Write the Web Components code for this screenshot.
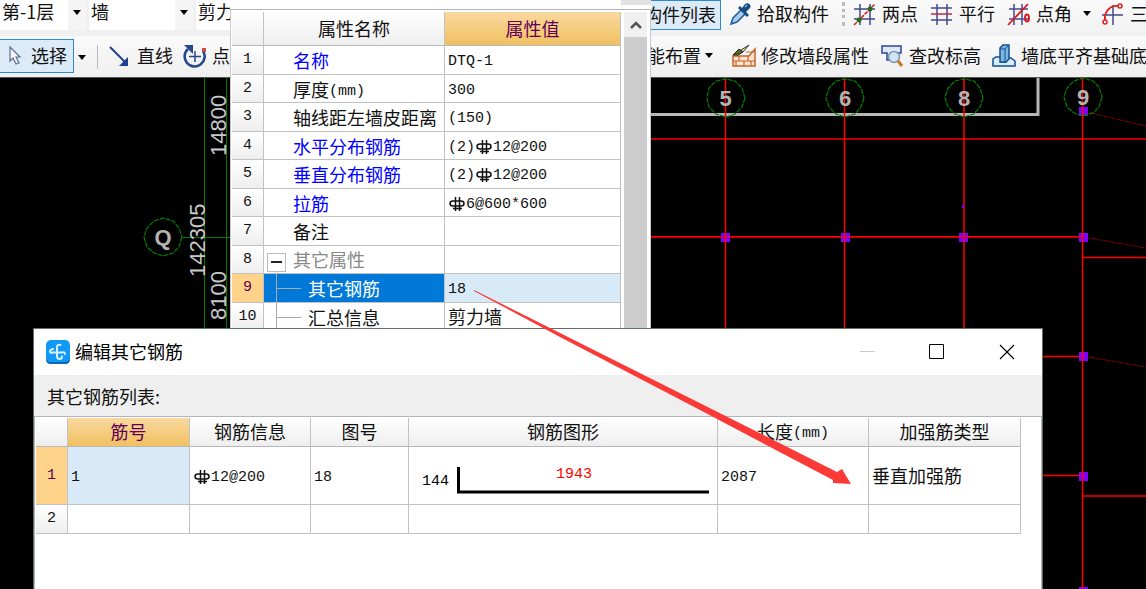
<!DOCTYPE html>
<html lang="zh-CN">
<head>
<meta charset="utf-8">
<title>编辑其它钢筋</title>
<style>
html,body{margin:0;height:100%;overflow:hidden;background:#000}
body{font:18px/24px "Noto Sans CJK SC",sans-serif;color:#111}
</style>
</head>
<body>
<cad-app></cad-app>
<script>
const define = (name, html) => customElements.define(name, class extends HTMLElement {
  connectedCallback() {
    if (this.shadowRoot) return;
    this.attachShadow({ mode: 'open' }).innerHTML = typeof html === 'function' ? html(this) : html;
  }
});

const ICONS = {
  cursor: '<path d="M8 3v14l3-3 3 6 3-1-3-6h4z" fill="#f4f7fb" stroke="#5b6f94" stroke-width="1.2"/>',
  line: '<path d="M2 3 18 19" stroke="#1f3f8f" stroke-width="2"/><path d="M20 22h-9l9-9z" fill="#1f3f8f"/>',
  rotate: '<path d="M5 5A10 10 0 1 0 20 7" fill="none" stroke="#24488c" stroke-width="2.6"/><path d="M1 1h9v9z" fill="#24488c"/><path d="M12 7v11M6 12.500h12" stroke="#24488c" stroke-width="1.500"/><path d="M19 4h4v4h-4z" fill="#c8504c"/>',
  dropper: '<path d="M3 22l2-6 9-9 4 4-9 9z" fill="#a8cdf0" stroke="#1d5a9e" stroke-width="1.500"/><path d="M10 6l9 9 2-2-3-3 4-4c2-3-2-6-5-4l-3 4-2-2z" fill="#174c80"/><path d="M17 5l2-2" stroke="#7fb5e6" stroke-width="1.500"/>',
  twopoint: '<path d="M7 2v21M17 2v21M1 7h21M1 17h21" stroke="#414a8c" stroke-width="1.500"/><path d="M1 23 22 2" stroke="#e01818" stroke-width="1.500" stroke-dasharray="4 1"/><circle cx="6" cy="18" r="2.500" fill="#286a1a"/><circle cx="17" cy="7" r="2.500" fill="#286a1a"/>',
  parallel: '<path d="M7 2v21M17 2v21M1 6h21M1 18h21" stroke="#414a8c" stroke-width="1.500"/><path d="M1 12h21" stroke="#c02840" stroke-width="1.500"/>',
  pointangle: '<path d="M7 2v21M15 2v21M2 7h19M2 17h19" stroke="#414a8c" stroke-width="1.500"/><path d="M1 23 21 2" stroke="#e01818" stroke-width="1.800"/><ellipse cx="20" cy="16" rx="2" ry="3.500" fill="none" stroke="#d02020" stroke-width="2"/>',
  arc: '<path d="M12 3v20M1 13h21" stroke="#414a8c" stroke-width="1.500"/><path d="M4 18C3 10 9 3 17 4" fill="none" stroke="#e02020" stroke-width="1.800"/><circle cx="4" cy="20" r="2" fill="#fff" stroke="#e02020" stroke-width="1.500"/><circle cx="19" cy="4" r="2" fill="#fff" stroke="#e02020" stroke-width="1.500"/>',
  wall: '<path d="M1 12h16l6-7v17H1z" fill="#fbe3cf" stroke="#c86428" stroke-width="1.500"/><path d="M1 17h22M7 12v5M16 12v5M4 17v5M12 17v5M19 17v5M14 8h8" stroke="#c86428" stroke-width="1.200"/><path d="M1 11l6-6 4 3-5 3z" fill="#5a6a20" stroke="#222"/><path d="M9 6l8-5-6 7z" fill="#f6ddb0" stroke="#333"/>',
  inspect: '<path d="M2 2h19v7h-3v7H7V9H2z" fill="#dfe8fa" stroke="#2d459a" stroke-width="1.500"/><circle cx="14" cy="13" r="5.500" fill="#cfe6f6" stroke="#8296ac" stroke-width="1.500"/><path d="M18 17l4 5" stroke="#c87c20" stroke-width="3"/>',
  base: '<path d="M1 21v-6l3-2h5v5h5v-4h5l4 3v5H1z" fill="#d8ecfa" stroke="#124f94" stroke-width="1.500"/><path d="M8 18V4l3-3h6v14l-3 3z" fill="#7eb8e2" stroke="#124f94" stroke-width="1.500"/><path d="M13 5v13M8 5h5l3-3" stroke="#124f94" fill="none"/>',
  logo: '<rect width="24" height="24" rx="5" fill="#119af5"/><path d="M0 18v1q0 5 5 5h14q5 0 5-5v-1q-1 4-5 4H5q-4 0-5-4z" fill="#0969b4"/><path d="M14.500 5q-3.500-1-3.500 2v9q0 3 2.500 3T16 16.500M7 9q-3 .5-3 2.500t3 1h9q3-1 3 1.500" fill="none" stroke="#d8f0ff" stroke-width="2" stroke-linecap="round"/>'
};
const icon = (n) => `<svg width="24" height="24" viewBox="0 0 24 24" aria-hidden="true">${ICONS[n]}</svg>`;
const caret = '<svg class="caret" width="10" height="6" viewBox="0 0 10 6" aria-hidden="true"><path d="M1 0h8L5 5z" fill="#000"/></svg>';
const rebar = '<svg class="rebar" width="18" height="16" viewBox="0 0 18 16" role="img" aria-label="钢筋"><path d="M7.500 1v14M11.500 1v14M5 12.500h9" stroke="#111" stroke-width="1.500" fill="none"/><path d="M5 5h8q3 0 3 2.500T13 10H5Q2 10 2 7.500T5 5z" fill="none" stroke="#111" stroke-width="1.500"/></svg>';

/* Drop-down list of a toolbar */
define('combo-box', (el) => `<style>
:host{display:grid;height:30px;background:#fff;flex:none}
select,.drop{grid-area:1/1}
select{appearance:none;border:0;margin:0;padding:0 0 8px 2px;background:none;font:inherit;line-height:22px;color:inherit;width:100%;height:30px}
.drop{justify-self:end;width:18px;background:#f5f5f5;display:grid;place-items:center;padding-bottom:4px;pointer-events:none}
</style><select aria-label="${el.getAttribute('label')}"><option>${el.getAttribute('value')}</option></select><span class="drop">${caret}</span>`);

/* Toolbar button with icon, caption and optional drop-down mark */
define('tool-button', (el) => `<style>
:host{display:block;flex:none}
button{display:flex;align-items:center;gap:5px;height:100%;width:100%;box-sizing:border-box;padding:0;margin:0;border:0;background:none;font:inherit;color:inherit;white-space:nowrap}
svg{flex:none}
span{padding-bottom:2px}
.caret{margin-left:var(--caret-gap,2px)}
:host([active]) button{background:#dcebf7;border:1px solid #2a8ad4;padding:var(--pad,0 4px)}
</style><button type="button">${el.getAttribute('icon') ? icon(el.getAttribute('icon')) : ''}<span><slot></slot></span>${el.hasAttribute('menu') ? caret : ''}</button>`);

define('tool-bars', `<style>
:host{display:block;background:#f0f0f0;border-bottom:1px solid #555;overflow:hidden}
.row{display:flex}
.left{flex:0 0 640px;display:flex;min-width:0}
.right{flex:1;display:flex;min-width:0;overflow:hidden;gap:12px}
.first{height:36px;align-items:flex-start}
.first .left{gap:3px}
.first .right{height:36px;background:linear-gradient(#fafafa,#f1f1f1)}
.first tool-button{height:27px}
.second{height:41px;background:linear-gradient(#fafafa,#efefef)}
.second tool-button{height:40px}
.floor{width:86px}.kind{width:104px}.name{flex:1}
.first .list{width:81px;height:30px;margin-right:-5px;--pad:0 3px}
.grip{width:5px;height:24px;margin:2px -4px 0 1px;border-left:3px dotted #bbb;box-sizing:border-box}
.rule{width:1px;height:24px;margin-top:9px;background:#bbb}
.second .pick{width:75px;height:34px;margin:3px 0 0 -1px;--pad:0 5px 0 2px}
.second .left{gap:10px}
.second .right{gap:11px}
.more{border:0;background:none;padding:0;width:10px;margin-left:-7px}
.place{padding-left:7px;--caret-gap:-2px}
.angle{--caret-gap:5px;margin-right:-3px}
.row .wall{margin-left:-4px}
</style>
<div class="row first">
 <div class="left"><combo-box class="floor" label="楼层" value="第-1层"></combo-box><combo-box class="kind" label="构件类型" value="墙"></combo-box><combo-box class="name" label="构件" value="剪力"></combo-box></div>
 <div class="right"><tool-button class="list" active>构件列表</tool-button><tool-button icon="dropper">拾取构件</tool-button><span class="grip"></span><tool-button icon="twopoint">两点</tool-button><tool-button icon="parallel">平行</tool-button><tool-button class="angle" icon="pointangle" menu>点角</tool-button><tool-button icon="arc">三</tool-button></div>
</div>
<div class="row second">
 <div class="left"><tool-button class="pick" icon="cursor" active>选择</tool-button><button class="more" aria-label="更多选择方式">${caret}</button><span class="rule"></span><tool-button icon="line">直线</tool-button><tool-button icon="rotate">点</tool-button></div>
 <div class="right"><tool-button class="place" menu>能布置</tool-button><span class="rule"></span><tool-button class="wall" icon="wall">修改墙段属性</tool-button><tool-button icon="inspect">查改标高</tool-button><tool-button icon="base">墙底平齐基础底</tool-button></div>
</div>`);

/* Drawing area: axis grid, axis bubbles and dimensions, in window coordinates below the 78px toolbars */
const bubble = (x, y, t) => `<polygon points="${Array.from({length:12},(_, i)=>`${Math.round(x+19*Math.cos(i*Math.PI/6))},${Math.round(y+19*Math.sin(i*Math.PI/6))}`).join(' ')}" fill="none" stroke="#008000" stroke-width="1.200" stroke-dasharray="5 1"/><text class="axis" x="${x}" y="${y+8}" text-anchor="middle">${t}</text>`;
const node = (x, y) => `<rect x="${x-4}" y="${y-4}" width="9" height="9" fill="#8000ff"/>`;
define('cad-canvas', `<style>
:host{display:block;min-height:0;background:#000;overflow:hidden}
svg{display:block;width:100%;height:100%}
text{font:22px "Liberation Sans",sans-serif;fill:#c8c8c8}
.axis{font-weight:bold;fill:#b4b4b4}
</style>
<svg><g transform="translate(0 -78)">
<path d="M640 114.500H1038V78" fill="none" stroke="#b8b8b8" stroke-width="3"/>
<path d="M204.500 78V340M226.500 78V340M182 237.500h50" stroke="#007c00" fill="none"/>
<path d="M640 139H4000M1083 496H4000" stroke="#b80000" stroke-width="2"/>
<path d="M640 237H1083M1083 257.500H4000M1042 356.500h41M1042 475.500h41" stroke="#f00" stroke-width="1.500"/>
<path d="M1083 111l630 150M1083 237l630 110M1083 356l630 110" stroke="#780000" stroke-dasharray="6 1"/>
${[725,845,963,1083].map(x=>node(x,237)).join('')}${[111,356,476,591].map(y=>node(1083,y)).join('')}
<path d="M725.500 78V340M844.500 78V340M964 78V340M1082.500 78V4000" stroke="#f00" stroke-width="1.500"/><path d="M640 236.500H1083" stroke="#f00"/>
<rect x="962" y="205" width="2" height="3" fill="#8000ff"/>
${bubble(725.5,97.5,'5')}${bubble(845,97.5,'6')}${bubble(964,97.5,'8')}${bubble(1083,97,'9')}${bubble(163,237,'Q')}
<text transform="translate(226 156) rotate(-90)">14800</text>
<text transform="translate(205 277) rotate(-90)">142305</text>
<text transform="translate(226 320) rotate(-90)">8100</text>
</g></svg>`);

const GRID = `
table{border-collapse:separate;border-spacing:0;table-layout:fixed;width:100%;line-height:22px}
th,td{box-sizing:border-box;border:solid #c2c2c2;border-width:0 1px 1px 0;padding:0;font-weight:400;white-space:nowrap;overflow:hidden}
th{background:linear-gradient(#fff,#eee);text-align:center}
td{background:#fff;text-align:left}
td.val{padding-left:3px}
thead th{border-bottom-color:#b8b8b8}
thead .on{background:linear-gradient(#fad9a0,#f0c060);color:#600058}
tbody .on{background:#ffd48a;color:#600058}
td.cur{background:#d8eaf8}
.l,tbody th{font:15px/16px "Liberation Mono","Noto Sans CJK SC",monospace}
.l{vertical-align:2px}
.rebar{vertical-align:-2px}`;

/* Property list of the current member */
const twig = (name) => `<div class="twig"><svg width="44" height="28" aria-hidden="true"><path d="M12.500 0V28M12 14.500H37" stroke="#aaa" fill="none"/></svg><span>${name}</span></div>`;
const props = [
  ['名称','<span class="l">DTQ-1</span>','key'],
  ['厚度<span class="l">(mm)</span>','<span class="l">300</span>'],
  ['轴线距左墙皮距离','<span class="l">(150)</span>'],
  ['水平分布钢筋',`<span class="l">(2)</span>${rebar}<span class="l">12@200</span>`,'key'],
  ['垂直分布钢筋',`<span class="l">(2)</span>${rebar}<span class="l">12@200</span>`,'key'],
  ['拉筋',`${rebar}<span class="l">6@600*600</span>`,'key'],
  ['备注',''],
  ['<button class="fold" aria-label="折叠"></button>其它属性','','group'],
  [twig('其它钢筋'),'<span class="l">18</span>','child sel'],
  [twig('汇总信息'),'剪力墙','child']
];
define('property-panel', `<style>${GRID}
:host{display:block;background:#fff;box-sizing:border-box;overflow:hidden}
.top{height:9px;display:flex;justify-content:flex-end;border-bottom:1px solid #b4b4bc}
.top i{width:30px;height:5px;background:#e2e2e2}
.body{display:flex;padding:2px 3px 0 1px;border:solid #c8c8d0;border-width:0 1px}
.list{flex:1;min-width:0}
.bar{flex:none;width:23px;margin-left:3px;background:#cdcdcd}
.bar button{display:grid;place-items:center;width:100%;height:25px;border:0;padding:0;background:#f0f0f0}
thead tr{height:34px}
thead th{padding-bottom:2px}
tbody tr{height:28px}tbody tr:nth-child(odd){height:29px}
td.n{padding-left:29px}
td.val{padding-bottom:2px}
.key .n{color:#00f}
.group .n{color:#888;padding-left:3px}
.fold{appearance:none;width:19px;height:19px;margin:0 7px 0 0;padding:0;border:1px solid #bbb;background:linear-gradient(#222,#222) center/11px 2px no-repeat #fff;vertical-align:-4px}
.child .n{padding-left:0}
.twig{display:flex;align-items:center;height:27px}
.twig svg{flex:none}
.sel .n{background:#0078d7;color:#fff}
</style>
<div class="top"><i></i></div>
<div class="body"><div class="list"><table><colgroup><col style="width:32px"><col style="width:181px"><col></colgroup>
<thead><tr><th></th><th>属性名称</th><th class="on">属性值</th></tr></thead>
<tbody>${props.map((p,i)=>`<tr class="${p[2]||''}"><th scope="row" class="${i===8?'on':''}">${i+1}</th><td class="n">${p[0]}</td><td class="val ${i===8?'cur':''}">${p[1]}</td></tr>`).join('')}</tbody></table></div>
<div class="bar"><button aria-label="向上滚动"><svg width="14" height="10"><path d="M2 8 7 3l5 5" fill="none" stroke="#555" stroke-width="2.500"/></svg></button></div></div>`);

/* Dialog window listing the additional bars */
define('rebar-dialog', `<style>${GRID}
:host{display:flex;flex-direction:column;box-sizing:border-box;background:#fff;border:solid #5f6f66;border-width:1px 1px 0}
header{display:flex;align-items:center;height:46px;padding-left:12px}
h1{font:inherit;margin:0 0 0 5px;padding-bottom:2px;flex:1;color:#000}
header button{width:71px;height:46px;border:0;padding:0;background:none;display:grid;place-items:center}
.label{height:41px;box-sizing:border-box;padding:9px 13px;background:#efefef}
.body{flex:1;border:solid #b4b4bc;border-width:1px 1px 0;padding:1px 20px 0 1px}
thead tr{height:29px}.r1{height:58px}.r2{height:29px}
thead th,td.val{padding-bottom:2px}
.shape{display:block}
.shape text{font:15px "Liberation Mono",monospace}
</style>
<header>${icon('logo')}<h1>编辑其它钢筋</h1>
<button aria-label="最小化"><svg width="22" height="16"><path d="M6 7.500h15" stroke="#ccc"/></svg></button>
<button aria-label="最大化"><svg width="16" height="16"><path d="M1.500.5h14v14h-14z" fill="none" stroke="#000"/></svg></button>
<button aria-label="关闭"><svg width="16" height="16"><path d="M1 1l14 14M15 1 1 15" stroke="#000" stroke-width="1.200"/></svg></button></header>
<div class="label">其它钢筋列表:</div>
<div class="body"><table><colgroup><col style="width:32px"><col style="width:122px"><col style="width:121px"><col style="width:98px"><col style="width:309px"><col style="width:151px"><col></colgroup>
<thead><tr><th></th><th class="on">筋号</th><th>钢筋信息</th><th>图号</th><th>钢筋图形</th><th>长度<span class="l">(mm)</span></th><th>加强筋类型</th></tr></thead>
<tbody><tr class="r1"><th scope="row" class="on">1</th><td class="val cur"><span class="l">1</span></td><td class="val">${rebar}<span class="l">12@200</span></td><td class="val"><span class="l">18</span></td>
<td><svg class="shape" width="308" height="57"><path d="M49.500 20V45H300" fill="none" stroke="#000" stroke-width="3"/><text x="13" y="38">144</text><text x="147" y="31" fill="#f00">1943</text></svg></td>
<td class="val"><span class="l">2087</span></td><td class="val">垂直加强筋</td></tr>
<tr class="r2"><th scope="row">2</th><td></td><td></td><td></td><td></td><td></td><td></td></tr></tbody></table></div>`);

define('cad-app', `<style>
:host{display:grid;grid-template-rows:78px 1fr;height:100vh;position:relative;overflow:hidden}
property-panel{position:absolute;left:230px;top:0;width:421px;height:328px}
rebar-dialog{position:absolute;left:33px;top:328px;bottom:0;width:1010px}
.arrow{position:absolute;left:0;top:0;width:100%;height:100%;pointer-events:none}
</style>
<tool-bars></tool-bars><cad-canvas></cad-canvas>
<property-panel></property-panel><rebar-dialog></rebar-dialog>
<svg class="arrow" aria-hidden="true"><path d="M474 290 562 334 837 472l5-3 9 15-18-1v-3L700 410 560 337 474 291z" fill="#fb3a38"/></svg>`);
</script>
</body>
</html>
